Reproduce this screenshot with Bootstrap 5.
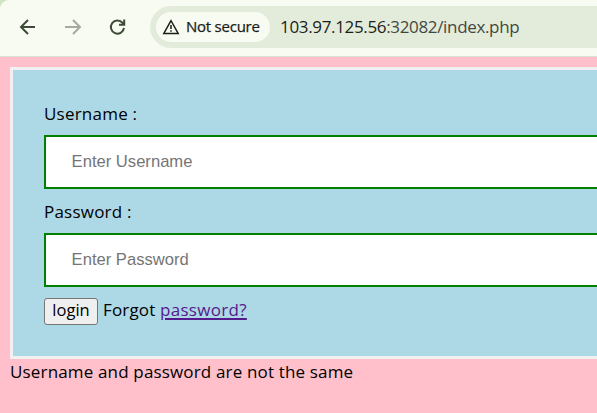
<!DOCTYPE html>
<html lang="en">
<head>
<meta charset="utf-8">
<meta name="viewport" content="width=device-width, initial-scale=1">
<title>Login</title>
<link href="https://cdn.jsdelivr.net/npm/bootstrap@5.3.0/dist/css/bootstrap.min.css" rel="stylesheet">
<style>
body{background:#ffc0cb;color:#000;font-family:"Open Sans","Noto Sans",sans-serif;height:413px}
.topbar{height:57px;background:#f8fbf1;border-bottom:1px solid #dfe0d3}
.corner{background:#cfe5c4}
.corner .topbar{border-top-left-radius:9px}
.navs{width:150px;padding-left:16px;gap:21px;height:54px}
.address{height:42px;margin-top:6px;background:#e3ecdb;border-radius:21px 0 0 21px;padding-left:6px}
.chip{width:114px;height:30px;border-radius:15px;background:#f8fbf1;color:#1b1d18;font-size:15px;padding-left:6px;gap:6px}
.chip span{letter-spacing:-.24px;-webkit-text-stroke:.25px #1b1d18;line-height:20px;margin-top:-2px}
.url{font-size:17px;margin-left:10px;color:#43483f;letter-spacing:-.34px;line-height:42px}
.url b{font-weight:400;color:#1b1d18}
.page-area{padding:10px 0 0 10px}
.login-box{height:292px;background:#add8e6;border:3px solid #f1f1f1;border-right:0;padding:31px 0 0 31px}
.lbl{font-size:17px;line-height:26px;height:34px;letter-spacing:.22px}
.field{height:54px;border:2px solid green;border-right:0;border-radius:0;padding:0 25.6px;font:16.6px "Liberation Sans",Arial,sans-serif;background:#fff}
.field + .lbl{margin-top:10px}
.field::placeholder{color:#757575;opacity:1}
.actions{margin-top:11px;gap:5px;height:27px}
.login-btn{width:54px;height:27px;border:1px solid #767676;border-radius:3px;background:#efefef;color:#000;padding:0 0 3px;font-size:16.5px;line-height:22px}
.txt{font-size:17px;line-height:26px;letter-spacing:.16px}
.actions span{margin-top:-4px}
.txt a{color:#551a8b;letter-spacing:.3px;text-underline-offset:2px;text-decoration-thickness:2px}
</style>
</head>
<body class="overflow-hidden">
<header class="corner">
<div class="topbar d-flex">
<div class="navs d-flex align-items-center flex-shrink-0">
<svg width="24" height="24" viewBox="0 0 24 24" fill="none" stroke="#3d4a36" stroke-width="2"><path d="M19 12H5.5M12 5l-7 7 7 7"/></svg>
<svg width="24" height="24" viewBox="0 0 24 24" fill="none" stroke="#a5aaa0" stroke-width="2"><path d="M4 12h14.500M12 5l7 7-7 7"/></svg>
<svg width="24" height="24" viewBox="0 0 24 24" fill="none" stroke="#3d4a36" stroke-width="2"><path d="M18 13a6.600 6.600 0 1 1-1.400-5.100L18.200 9.500M18.200 4.500V9.800H13"/></svg>
</div>
<div class="address d-flex align-items-center flex-grow-1">
<div class="chip d-flex align-items-center flex-shrink-0">
<svg width="18" height="18" viewBox="0 0 18 18" fill="none" stroke="#1b1d18" stroke-width="1.500"><path d="M9 2.700L1.800 15.500h14.400z"/><path d="M9 7v4M9 12.300v1.500"/></svg>
<span>Not secure</span>
</div>
<div class="url text-nowrap"><b>103.97.125.56</b>:32082/index.php</div>
</div>
</div>
</header>
<main class="page-area">
<form class="login-box">
<label class="lbl d-block" for="user">Username :</label>
<input id="user" class="field form-control" type="text" placeholder="Enter Username">
<label class="lbl d-block" for="pass">Password :</label>
<input id="pass" class="field form-control" type="password" placeholder="Enter Password">
<div class="actions d-flex align-items-center txt">
<button class="login-btn" type="button">login</button>
<span>Forgot <a href="#">password?</a></span>
</div>
</form>
<div class="txt">Username and password are not the same</div>
</main>
<script src="https://cdn.jsdelivr.net/npm/bootstrap@5.3.0/dist/js/bootstrap.bundle.min.js"></script>
</body>
</html>
